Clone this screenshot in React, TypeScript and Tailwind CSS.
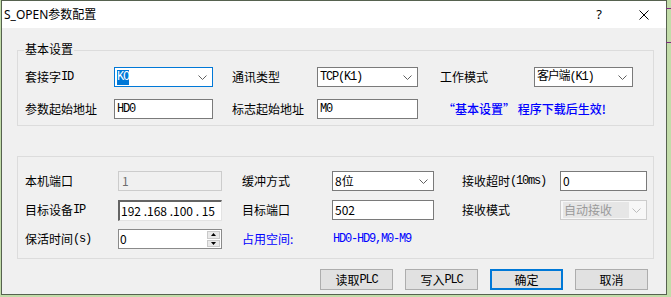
import React from 'react';

// font stacks
const cjk = "font-['Noto_Sans_CJK_SC',sans-serif]";
const mono = "font-['Liberation_Mono','Noto_Sans_CJK_SC',monospace] tracking-[-1.2px]";

const Chevron = ({ color = '#606060' }: { color?: string }) => (
  <svg width="9" height="5" viewBox="0 0 9 5" fill="none" aria-hidden="true">
    <path d="M0.5 0.5L4.5 4.5L8.5 0.5" stroke={color} strokeWidth="1" />
  </svg>
);

const Label = ({ w, children }: { w: string; children: React.ReactNode }) => (
  <span className={`${w} flex h-[20px] shrink-0 items-center whitespace-pre text-[12px] leading-none text-black ${cjk}`}>
    {children}
  </span>
);

const Row = ({ children }: { children: React.ReactNode }) => (
  <div className="flex h-[20px] items-center">{children}</div>
);

const Combo = ({
  w,
  text,
  font,
  focused,
}: {
  w: string;
  text: string;
  font: string;
  focused?: boolean;
}) => (
  <div
    className={`${w} flex h-[20px] shrink-0 items-center justify-between border bg-white pl-[2px] pr-[5px] ${
      focused ? 'border-[#0078d7]' : 'border-[#7a7a7a]'
    }`}
  >
    {focused ? (
      <span className={`flex h-[15px] items-center bg-[#0078d7] text-[12px] leading-none text-white ${font}`}>{text}</span>
    ) : (
      <span className={`text-[12px] leading-none text-black ${font}`}>{text}</span>
    )}
    <Chevron />
  </div>
);

const Input = ({ w, text, font }: { w: string; text: string; font: string }) => (
  <div className={`${w} flex h-[20px] shrink-0 items-center border border-[#7a7a7a] bg-white pl-[2px]`}>
    <span className={`text-[12px] leading-none text-black ${font}`}>{text}</span>
  </div>
);

const SpinBox = () => (
  <div className="flex h-[20px] w-[104px] shrink-0 items-center justify-between border border-[#8a8a8a] bg-white pl-[1px] pr-[1px]">
    <span className={`text-[12px] leading-none text-black ${cjk}`}>0</span>
    <div className="flex h-[16px] w-[13px] flex-col gap-[1px]">
      <div className="flex flex-1 items-center justify-center border border-[#c9c9c9] bg-[#e9e9e9]">
        <svg width="5" height="3" viewBox="0 0 5 3" aria-hidden="true">
          <path d="M2.5 0L5 3H0Z" fill="#000" />
        </svg>
      </div>
      <div className="flex flex-1 items-center justify-center border border-[#c9c9c9] bg-[#e9e9e9]">
        <svg width="5" height="3" viewBox="0 0 5 3" aria-hidden="true">
          <path d="M0 0H5L2.5 3Z" fill="#000" />
        </svg>
      </div>
    </div>
  </div>
);

const Button = ({ children, primary }: { children: React.ReactNode; primary?: boolean }) => (
  <div
    className={`flex h-[21px] w-[73px] items-center justify-center bg-[#e1e1e1] text-[12px] leading-none text-black ${cjk} ${
      primary ? 'border-2 border-[#0078d7]' : 'border border-[#adadad]'
    }`}
  >
    {children}
  </div>
);

export default function App() {
  return (
    <div className="relative h-[297px] w-[671px] overflow-hidden bg-[#c2dca9]">
      {/* bits of the window behind */}
      <div className="absolute right-0 top-[8px] h-[1px] w-[5px] bg-[#7d2a7d]" />
      <div className="absolute right-0 top-[42px] h-[1px] w-[5px] bg-[#7d2a7d]" />

      <div className="ml-[1px] flex h-[295px] w-[666px] flex-col border border-[#56624f] bg-[#f0f0f0]">
        {/* Title bar */}
        <div className="flex h-[27px] shrink-0 items-center bg-white pl-[2px] pr-[17px]">
          <span className="font-['Noto_Sans','Noto_Sans_CJK_SC',sans-serif] text-[12px] leading-none text-black">
            S_OPEN参数配置
          </span>
          <div className="ml-auto flex items-center gap-[37px]">
            <span className="font-['Noto_Sans',sans-serif] text-[13px] leading-none text-black">?</span>
            <svg width="10" height="10" viewBox="0 0 10 10" aria-hidden="true">
              <path d="M0.5 0.5L9.5 9.5M9.5 0.5L0.5 9.5" stroke="#000" strokeWidth="1" />
            </svg>
          </div>
        </div>

        <div className="flex flex-1 flex-col pl-[15px]">
          {/* 基本设置 */}
          <div className="relative mt-[22px] flex w-[637px] flex-col gap-[12px] border border-[#dcdcdc] pb-[6px] pl-[7px] pt-[16px]">
            <span
              className={`absolute -top-[10px] left-[6px] bg-[#f0f0f0] px-[1px] text-[12px] leading-[16px] text-black ${cjk}`}
            >
              基本设置
            </span>
            <Row>
              <Label w="w-[89px]">
                套接字<span className={mono}>ID</span>
              </Label>
              <Combo w="w-[99px]" text="KO" font={mono} focused />
              <div className="w-[19px] shrink-0" />
              <Label w="w-[85px]">通讯类型</Label>
              <Combo w="w-[101px]" text="TCP(K1)" font={mono} />
              <div className="w-[22px] shrink-0" />
              <Label w="w-[94px]">工作模式</Label>
              <Combo w="w-[99px]" text="客户端(K1)" font={mono} />
            </Row>
            <Row>
              <Label w="w-[89px]">参数起始地址</Label>
              <Input w="w-[99px]" text="HD0" font={mono} />
              <div className="w-[19px] shrink-0" />
              <Label w="w-[85px]">标志起始地址</Label>
              <Input w="w-[101px]" text="M0" font={mono} />
              <span className={`ml-[25px] whitespace-pre text-[12px] font-medium leading-none text-[#0000ff] ${cjk}`}>
                “基本设置” 程序下载后生效!
              </span>
            </Row>
          </div>

          {/* 端口 / 接收 */}
          <div className="mt-[30px] flex w-[637px] flex-col gap-[9px] border border-[#dcdcdc] pb-[9px] pl-[7px] pt-[14px]">
            <Row>
              <Label w="w-[93px]">本机端口</Label>
              <div className="flex h-[20px] w-[104px] shrink-0 items-center border border-[#cccccc] bg-[#f0f0f0] pl-[3px]">
                <span className={`text-[12px] leading-none text-[#6d6d6d] ${cjk}`}>1</span>
              </div>
              <div className="w-[20px] shrink-0" />
              <Label w="w-[90px]">缓冲方式</Label>
              <Combo w="w-[102px]" text="8位" font={cjk} />
              <div className="w-[28px] shrink-0" />
              <Label w="w-[98px]">
                接收超时<span className={mono}>(10ms)</span>
              </Label>
              <Input w="w-[87px]" text="0" font={cjk} />
            </Row>
            <Row>
              <Label w="w-[93px]">
                目标设备<span className={mono}>IP</span>
              </Label>
              <div className="flex h-[21px] w-[104px] shrink-0 items-center border-b border-l-2 border-r border-t-2 border-b-[#e3e3e3] border-l-[#646464] border-r-[#e3e3e3] border-t-[#646464] bg-white pl-[1px]">
                <span className={`whitespace-pre text-[12px] leading-none text-black ${cjk}`}>
                  192 .168 .100 . 15
                </span>
              </div>
              <div className="w-[20px] shrink-0" />
              <Label w="w-[90px]">目标端口</Label>
              <Input w="w-[102px]" text="502" font={cjk} />
              <div className="w-[28px] shrink-0" />
              <Label w="w-[98px]">接收模式</Label>
              <div className="flex h-[20px] w-[87px] shrink-0 items-center justify-between border border-[#cccccc] bg-[#f7f7f7] pl-[2px] pr-[5px]">
                <span className={`flex h-[16px] w-[66px] items-center bg-[#e6e6e6] pl-[1px] text-[12px] leading-none text-[#9a9a9a] ${cjk}`}>
                  自动接收
                </span>
                <Chevron color="#bcbcbc" />
              </div>
            </Row>
            <Row>
              <Label w="w-[93px]">
                保活时间<span className={mono}>(s)</span>
              </Label>
              <SpinBox />
              <div className="w-[20px] shrink-0" />
              <span className={`w-[91px] shrink-0 text-[12px] leading-none text-[#0000ff] ${cjk}`}>占用空间:</span>
              <span className={`text-[12px] leading-none text-[#0000ff] ${mono}`}>HD0-HD9,M0-M9</span>
            </Row>
          </div>

          {/* Buttons */}
          <div className="mt-[10px] flex justify-end gap-[12px] pr-[18px]">
            <Button>
              读取<span className={mono}>PLC</span>
            </Button>
            <Button>
              写入<span className={mono}>PLC</span>
            </Button>
            <Button primary>确定</Button>
            <Button>取消</Button>
          </div>
        </div>
      </div>
    </div>
  );
}
